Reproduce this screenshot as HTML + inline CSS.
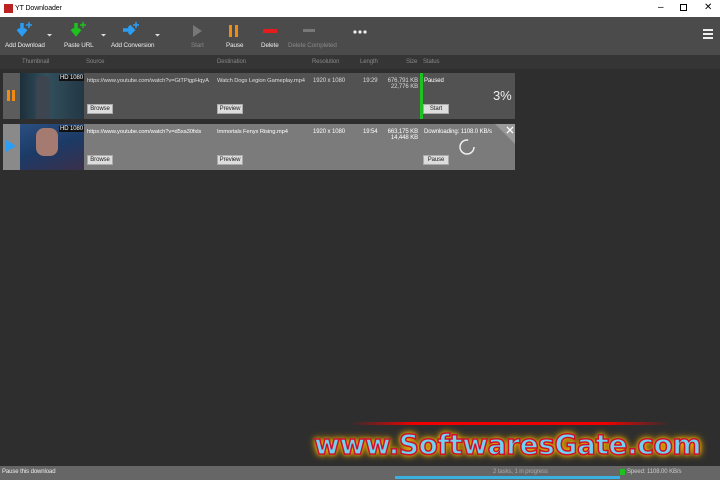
<!DOCTYPE html>
<html><head><style>
*{margin:0;padding:0;box-sizing:border-box}
body{width:720px;height:480px;background:#2e2e2e;font-family:"Liberation Sans",sans-serif;position:relative;overflow:hidden;font-size:6px;color:#ddd;letter-spacing:-0.1px}
.a{position:absolute;white-space:nowrap}
.tb{top:0;left:0;width:720px;height:17px;background:#fff;color:#000;font-size:7px}
.tool{top:17px;left:0;width:720px;height:38px;background:#4b4b4b}
.lbl{font-size:6.3px;color:#eee;top:42px}
.hdr{top:55px;left:0;width:720px;height:14px;background:#353535;color:#888}
.row{left:3px;width:512px;height:46px}
.btn{background:#ddd;color:#222;height:10px;font-size:6px;line-height:9px;text-align:center;border:1px solid #aaa}
.wm{left:314px;top:428px;font-family:"DejaVu Sans",sans-serif;font-weight:bold;font-size:28px;color:#6fd2f2;-webkit-text-stroke:1.5px #d0102a;text-shadow:0 0 4px #f3c000,0 0 7px #e8a000,0 0 9px #d49a00;letter-spacing:-0.4px;white-space:nowrap}
</style></head><body>
<div class="a tb"><div class="a" style="left:4px;top:4px;width:9px;height:9px;background:#b22"></div><span class="a" style="left:15px;top:5px">YT Downloader</span>
<span class="a" style="left:658px;top:2px;font-size:10px">–</span><span class="a" style="left:680px;top:4px;width:7px;height:7px;border:1px solid #000"></span><span class="a" style="left:704px;top:2px;font-size:10px">✕</span></div>
<div class="a tool">
<svg class="a" style="left:0;top:0" width="720" height="38">
<path d="M22 6v10M18 12l4 5 4-5" stroke="#2a9df4" stroke-width="3.5" fill="none"/><path d="M29 5v6M26 8h6" stroke="#2a9df4" stroke-width="1.5"/>
<path d="M76 6v10M72 12l4 5 4-5" stroke="#1ec21e" stroke-width="3.5" fill="none"/><path d="M83 5v6M80 8h6" stroke="#1ec21e" stroke-width="1.5"/>
<path d="M123 13h9M129 9l4 4-4 4" stroke="#2a9df4" stroke-width="3.5" fill="none"/><path d="M136 5v6M133 8h6" stroke="#2a9df4" stroke-width="1.5"/>
<path d="M47 17l2.5 2.5 2.5-2.5z M101 17l2.5 2.5 2.5-2.5z M155 17l2.5 2.5 2.5-2.5z" fill="#ddd"/>
<path d="M193 8l9 6-9 6z" fill="#777"/>
<rect x="229" y="8" width="3" height="12" fill="#f08a10"/><rect x="235" y="8" width="3" height="12" fill="#f08a10"/>
<rect x="263" y="12" width="14" height="4" fill="#e51c1c"/><rect x="303" y="12" width="12" height="3" fill="#777"/>
<circle cx="355" cy="15" r="1.6" fill="#eee"/><circle cx="360" cy="15" r="1.6" fill="#eee"/><circle cx="365" cy="15" r="1.6" fill="#eee"/>
<rect x="703" y="12" width="10" height="2" fill="#eee"/><rect x="703" y="16" width="10" height="2" fill="#eee"/><rect x="703" y="20" width="10" height="2" fill="#eee"/>
</svg></div>
<span class="a lbl" style="left:5px">Add Download</span><span class="a lbl" style="left:64px">Paste URL</span><span class="a lbl" style="left:111px">Add Conversion</span>
<span class="a lbl" style="left:191px;color:#888">Start</span><span class="a lbl" style="left:226px">Pause</span><span class="a lbl" style="left:261px">Delete</span><span class="a lbl" style="left:288px;color:#888">Delete Completed</span>
<div class="a hdr"><span class="a" style="left:22px;top:4px">Thumbnail</span><span class="a" style="left:86px;top:4px">Source</span><span class="a" style="left:217px;top:4px">Destination</span><span class="a" style="left:312px;top:4px">Resolution</span><span class="a" style="left:360px;top:4px">Length</span><span class="a" style="left:406px;top:4px">Size</span><span class="a" style="left:423px;top:4px">Status</span></div>

<div class="a row" style="top:73px;background:#525252"></div>
<div class="a" style="left:3px;top:73px;width:17px;height:46px;background:#5c5c5c"></div>
<div class="a" style="left:7px;top:90px;width:3px;height:11px;background:#f08a10"></div><div class="a" style="left:12px;top:90px;width:3px;height:11px;background:#f08a10"></div>
<div class="a" style="left:20px;top:73px;width:64px;height:46px;background:linear-gradient(90deg,#1c2f3a,#33505e 40%,#223844)"></div>
<div class="a" style="left:36px;top:76px;width:14px;height:43px;background:#3d4650;border-radius:5px 5px 0 0"></div>
<span class="a" style="left:59px;top:75px;background:#111;color:#fff;font-size:6px;padding:0 1px">HD 1080</span>
<span class="a" style="left:87px;top:78px;font-size:5.8px">https://www.youtube.com/watch?v=GtTPigpHqyA</span>
<span class="a" style="left:217px;top:78px;font-size:5.8px">Watch Dogs  Legion Gameplay.mp4</span>
<span class="a" style="left:313px;top:78px">1920 x 1080</span><span class="a" style="left:363px;top:78px">19:29</span>
<span class="a" style="left:380px;top:78px;width:38px;text-align:right">676,791 KB<br>22,776 KB</span>
<span class="a" style="left:424px;top:78px;color:#fff">Paused</span>
<span class="a" style="left:493px;top:88px;font-size:13px;color:#eee">3%</span>
<div class="a" style="left:420px;top:73px;width:3px;height:46px;background:#1fc11f"></div>
<div class="a btn" style="left:87px;top:104px;width:26px">Browse</div><div class="a btn" style="left:217px;top:104px;width:26px">Preview</div><div class="a btn" style="left:423px;top:104px;width:26px">Start</div>

<div class="a row" style="top:124px;background:#7b7b7b"></div>
<div class="a" style="left:3px;top:124px;width:17px;height:46px;background:#8a8a8a"></div>
<svg class="a" style="left:6px;top:140px" width="10" height="12"><path d="M0 0l10 6-10 6z" fill="#2a9df4"/></svg>
<div class="a" style="left:20px;top:124px;width:64px;height:46px;background:linear-gradient(160deg,#2a4f80,#1c3a66 50%,#3a2f4a)"></div>
<div class="a" style="left:36px;top:128px;width:22px;height:28px;background:#a57a70;border-radius:8px"></div>
<span class="a" style="left:59px;top:126px;background:#111;color:#fff;font-size:6px;padding:0 1px">HD 1080</span>
<span class="a" style="left:87px;top:129px;color:#fff;font-size:5.8px">https://www.youtube.com/watch?v=d5xa30fxls</span>
<span class="a" style="left:217px;top:129px;color:#fff;font-size:5.8px">Immortals Fenyx Rising.mp4</span>
<span class="a" style="left:313px;top:129px;color:#fff">1920 x 1080</span><span class="a" style="left:363px;top:129px;color:#fff">19:54</span>
<span class="a" style="left:380px;top:129px;width:38px;text-align:right;color:#fff">663,175 KB<br>14,448 KB</span>
<span class="a" style="left:424px;top:129px;color:#fff">Downloading: 1108.0 KB/s</span>
<svg class="a" style="left:458px;top:138px" width="18" height="18"><circle cx="9" cy="9" r="7" stroke="#eee" stroke-width="1.5" fill="none" stroke-dasharray="34 10"/></svg>
<svg class="a" style="left:495px;top:124px" width="20" height="20"><path d="M0 0h20v20z" fill="#999"/><path d="M12 3l6 6M18 3l-6 6" stroke="#fff" stroke-width="1.3"/></svg>
<div class="a btn" style="left:87px;top:155px;width:26px">Browse</div><div class="a btn" style="left:217px;top:155px;width:26px">Preview</div><div class="a btn" style="left:423px;top:155px;width:26px">Pause</div>

<div class="a" style="left:350px;top:422px;width:320px;height:3px;background:linear-gradient(90deg,transparent,#e00 20%,#e00 80%,transparent)"></div>
<div class="a" style="left:0;top:466px;width:720px;height:14px;background:#666"></div>
<span class="a" style="left:2px;top:469px;color:#eee">Pause this download</span>
<div class="a" style="left:395px;top:476px;width:225px;height:3px;background:#3ab0e0"></div>
<span class="a" style="left:493px;top:469px;color:#aaa">2 tasks, 1 in progress</span>
<div class="a" style="left:620px;top:469px;width:5px;height:6px;background:#1fc11f"></div><span class="a" style="left:627px;top:469px;color:#ccc">Speed: 1108.00 KB/s</span>
<div class="a wm">www.SoftwaresGate.com</div>
</body></html>
